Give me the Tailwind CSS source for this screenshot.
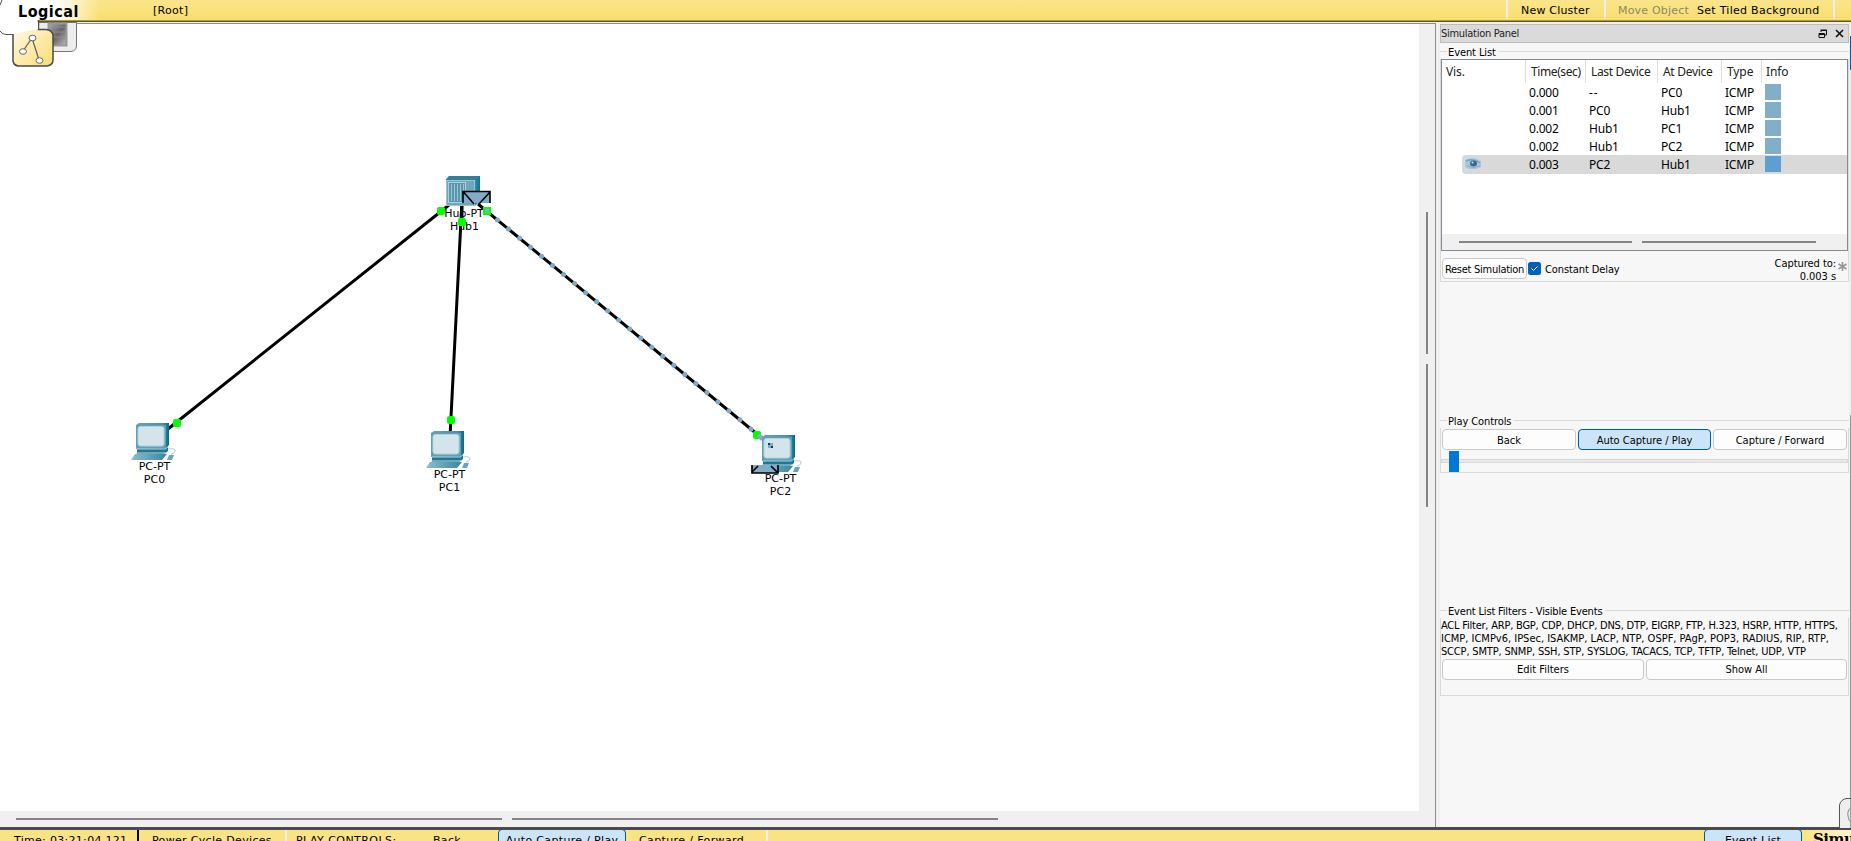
<!DOCTYPE html>
<html lang="en">
<head>
<meta charset="utf-8">
<title>Logical Workspace</title>
<script src="https://cdn.jsdelivr.net/npm/@tailwindcss/browser@4"></script>
</head>
<body class="w-[1851px] h-[841px] overflow-hidden flex flex-col bg-[#f0f0f0] text-black text-[11px] font-['DejaVu_Sans',sans-serif] whitespace-nowrap">

<header class="h-[22px] shrink-0 flex bg-linear-to-b from-[#fbe58b] to-[#f8de6c] border-b border-[#5e5530] shadow-[inset_0_-1px_0_#b29a37]">
  <div class="w-[100px] h-5 bg-linear-to-r from-white from-55% to-white/0 pl-[18px] pt-[2px] text-[16px] leading-[20px] font-bold tracking-[0.5px] font-['DejaVu_Sans_Condensed','DejaVu_Sans',sans-serif]">Logical</div>
  <div class="pl-[53px] leading-[21px] w-[1406px] tracking-[0.3px]">[Root]</div>
  <div class="w-[98px] h-[19px] border-l-2 border-[#eeeeee] pl-[13px] leading-[21px] tracking-[0.2px]">New Cluster</div>
  <div class="w-[229px] h-[19px] border-l-2 border-[#eeeeee] pl-[12px] leading-[21px] flex tracking-[0.28px]"><span class="w-[79px] text-[#8f876b] tracking-[0.2px]">Move Object</span><span>Set Tiled Background</span></div>
  <div class="h-[19px] border-l-2 border-[#eeeeee]"></div>
</header>

<main class="h-[805px] shrink-0 flex">
  <section class="w-[1436px] flex flex-col border-t border-r border-[#888c94] mt-px">
    <div class="h-[787px] flex">
      <svg class="w-[1419px] h-[787px] bg-white" viewBox="0 24 1419 787">
        <defs>
          <linearGradient id="hub" x2="1"><stop stop-color="#70a9bd"/><stop offset=".7" stop-color="#65a0b5"/><stop offset="1" stop-color="#087790"/></linearGradient>
          <linearGradient id="edge" x2="1"><stop stop-color="#68a3b8"/><stop offset=".8" stop-color="#4b91a8"/><stop offset="1" stop-color="#006e89"/></linearGradient>
          <linearGradient id="base" x2="1"><stop stop-color="#8dbdcd"/><stop offset="1" stop-color="#39869f"/></linearGradient>
          <g id="pc">
            <path d="M6 25H34L37 23V28L33 31H6Z" fill="#1d7894"/>
            <path d="M5 2 8 0H38V22L34 26H5Z" fill="url(#edge)"/>
            <rect x="5" y="2" width="30" height="23" fill="#60a0b6"/>
            <rect x="7" y="3.500" width="26" height="19.500" rx="2.500" fill="#d3e4ea" stroke="#b5d1db"/>
            <path d="M6 26H34L37 24" fill="none" stroke="#b4d1db"/>
            <path d="M4 31H36L31 37H0Z" fill="url(#base)"/>
            <path d="M5 30H36" stroke="#c1dae2"/>
            <path d="M37 26Q45 25 44 28T40 31" fill="none" stroke="#b9c9cf"/>
            <path d="M38 32H43L41 37H36Z" fill="#69a3b8"/>
          </g>
        </defs>
        <path d="M449 205 168 429M462 200 450 437M478 204 763 439" fill="none" stroke="#000" stroke-width="3"/>
        <path d="M497.500 220 762 438" stroke="#82aac5" stroke-width="5" stroke-linecap="round" stroke-dasharray="0 14.280"/>
        <path d="m446 179 3-3h31v25l-5 5h-29Z" fill="url(#hub)"/>
        <path d="m446 180 3-4h31l-4 4Z" fill="#347f98"/>
        <rect x="446.500" y="180.500" width="28" height="25" fill="#70a6ba" stroke="#9ac4d1"/>
        <rect x="448.500" y="182.500" width="17" height="20" fill="#5a98ae" stroke="#add0da"/>
        <path d="M451.500 184V201M454.500 184V201M457.500 184V201M460.500 184V201M463.500 184V201" stroke="#9cc2cf"/>
        <path d="M462 206V220" stroke="#000" stroke-width="3"/>
        <path d="M463 191H490V203H463Z" fill="#82abc8"/>
        <path d="M463 203V191.500H490V203M463.500 192 474 204M490 192 479 204" fill="none" stroke="#000" stroke-width="1.600"/>
        <g class="text-[11px]" text-anchor="middle">
          <text x="464" y="217">Hub-PT</text><text x="464.500" y="230">Hub1</text>
        </g>
        <rect x="437" y="207" width="8" height="8" rx="2" fill="#0f0"/>
        <rect x="458" y="218" width="8" height="8" rx="2" fill="#0f0"/>
        <rect x="484" y="208" width="6" height="6" fill="#82abc8" stroke="#0f0" stroke-width="2"/>
        <use href="#pc" x="131" y="423"/><use href="#pc" x="426" y="431"/>
        <rect x="173" y="419" width="8" height="8" rx="2" fill="#0f0"/>
        <rect x="447" y="416" width="8" height="8" rx="2" fill="#0f0"/>
        <rect x="753" y="431" width="8" height="8" rx="2" fill="#0f0"/>
        <path d="M758 435 762 439" stroke="#82abc8" stroke-width="4"/>
        <use href="#pc" x="757" y="435"/>
        <path d="M768 443H773V448H768Z" fill="#7da9c5"/><path d="M768 443H770V445H768ZM771 446H773V448H771Z" fill="#103e55"/>
        <rect x="752" y="465" width="26" height="8" fill="#82abc8"/>
        <path d="M752 465V473H778V465M752 472 758 466M777 472 771 466" fill="none" stroke="#000" stroke-width="1.700"/>
        <g class="text-[11px]" text-anchor="middle">
          <text x="154.500" y="470">PC-PT</text><text x="154.500" y="483">PC0</text>
          <text x="449.500" y="478">PC-PT</text><text x="449.500" y="491">PC1</text>
          <text x="780.500" y="482">PC-PT</text><text x="780.500" y="495">PC2</text>
        </g>
      </svg>
      <div class="w-4 pl-[7px] pt-[188px] flex flex-col gap-[10px]">
        <div class="w-[2px] h-[142px] bg-[#858585]"></div>
        <div class="w-[2px] h-[143px] bg-[#858585]"></div>
      </div>
    </div>
    <div class="h-4 pl-4 pt-[7px] flex gap-[10px]">
      <div class="w-[486px] h-[2px] bg-[#858585]"></div>
      <div class="w-[486px] h-[2px] bg-[#858585]"></div>
    </div>
  </section>

  <aside class="ml-1 w-[409px] mt-[2px] bg-[#f7f7f7] flex flex-col text-[11px] font-['DejaVu_Sans_Condensed','DejaVu_Sans',sans-serif]">
    <div class="h-[19px] shrink-0 border border-[#bcbcbc] bg-[#dadada] flex items-center pt-px">
      <span class="text-[#222] flex-1 tracking-[-0.28px]">Simulation Panel</span>
      <svg class="w-[27px] h-[10px] mr-[3px]" viewBox="0 0 27 10" fill="none" stroke="#111"><path d="M3 3V1.500H8.500V6H7M2.500 1H9" /><path d="M1 4.500H6.500V8.500H1ZM1 5.500H6" /><path d="m18 1 7 7m0-7-7 7" stroke-width="1.600"/></svg>
    </div>

    <div class="h-[239px] shrink-0 flex flex-col">
      <div class="h-[16px] flex items-center"><i class="w-[7px] h-px bg-[#dadada]"></i><span class="px-px pt-[4px] tracking-[-0.1px]">Event List</span><i class="flex-1 h-px ml-[2px] bg-[#dadada]"></i></div>
      <div class="h-[223px] border-x border-b border-[#dadada]">
        <div class="h-[192px] border border-[#858993] bg-white flex flex-col text-[12px] font-['Noto_Sans',sans-serif]">
          <div class="h-[23px] flex leading-[24px] text-[#222] tracking-[-0.1px]">
            <div class="w-[84px] pl-1 border-r border-[#dedede]">Vis.</div>
            <div class="w-[60px] pl-[5px] border-r border-[#dedede] tracking-[-0.4px]">Time(sec)</div>
            <div class="w-[72px] pl-[5px] border-r border-[#dedede] tracking-[-0.35px]">Last Device</div>
            <div class="w-[64px] pl-[5px] border-r border-[#dedede] tracking-[-0.3px]">At Device</div>
            <div class="w-[40px] pl-[5px] border-r border-[#dedede]">Type</div>
            <div class="pl-1">Info</div>
          </div>
          <div class="flex flex-col leading-[18px] h-[151px] pt-px tracking-[-0.2px]">
            <div class="h-[18px] flex pl-[87px]"><span class="w-[60px]">0.000</span><span class="w-[72px] tracking-[1px]">--</span><span class="w-[64px]">PC0</span><span class="w-[40px]">ICMP</span><i class="size-4 bg-[#82aeca]"></i></div>
            <div class="h-[18px] flex pl-[87px]"><span class="w-[60px]">0.001</span><span class="w-[72px]">PC0</span><span class="w-[64px]">Hub1</span><span class="w-[40px]">ICMP</span><i class="size-4 bg-[#82aeca]"></i></div>
            <div class="h-[18px] flex pl-[87px]"><span class="w-[60px]">0.002</span><span class="w-[72px]">Hub1</span><span class="w-[64px]">PC1</span><span class="w-[40px]">ICMP</span><i class="size-4 bg-[#82aeca]"></i></div>
            <div class="h-[18px] flex pl-[87px]"><span class="w-[60px]">0.002</span><span class="w-[72px]">Hub1</span><span class="w-[64px]">PC2</span><span class="w-[40px]">ICMP</span><i class="size-4 bg-[#82aeca]"></i></div>
            <div class="h-[19px] ml-5 -mt-px pt-px flex bg-[#d9d9d9] rounded-l-sm">
              <svg class="w-[67px] h-4 shrink-0" viewBox="0 0 67 16"><path d="M3 4Q9 1 15 3L19 5V11L14 13H7L3 11Z" fill="#a3c8df"/><path d="M4 5Q11 2 18 7" fill="none" stroke="#7ea6be" stroke-width="1.500"/><ellipse cx="11.500" cy="7.500" rx="3.500" ry="3" fill="#3b6b89"/><circle cx="10.500" cy="6.500" r="1" fill="#c9e4f3"/><path d="M5 10Q11 13 18 10" fill="none" stroke="#82adc6"/></svg>
              <span class="w-[60px]">0.003</span><span class="w-[72px]">PC2</span><span class="w-[64px]">Hub1</span><span class="w-[40px]">ICMP</span><i class="size-4 bg-[#5d9fd0]"></i></div>
          </div>
          <div class="h-4 bg-[#f0f0f0] pl-[17px] pt-[7px] flex gap-[10px]"><i class="w-[173px] h-[2px] bg-[#858585]"></i><i class="w-[174px] h-[2px] bg-[#858585]"></i></div>
        </div>
        <div class="flex pt-[7px] pl-px">
          <div class="w-[85px] h-[21px] border border-[#c9c9c9] rounded bg-[#fdfdfd] text-center leading-[21px] tracking-[-0.27px]">Reset Simulation</div>
          <svg class="w-[13px] h-[13px] ml-px mt-1" viewBox="0 0 13 13"><rect width="13" height="13" rx="2.500" fill="#0560b6"/><path d="m3.500 6.500 2 2 4-4" fill="none" stroke="#fff"/></svg>
          <span class="ml-1 leading-[23px] tracking-[-0.1px]">Constant Delay</span>
          <div class="ml-auto text-right leading-[13px] -mt-px tracking-[-0.05px]">Captured to:<br>0.003 s</div>
          <svg class="w-[9px] h-[9px] ml-[2px] mr-px mt-[4px]" viewBox="0 0 9 9" stroke="#969696" stroke-width="1.600"><path d="M4.500 0V9M.5 2 8.500 7M.5 7 8.500 2"/></svg>
        </div>
      </div>
    </div>

    <div class="h-[60px] mt-[130px] shrink-0 flex flex-col">
      <div class="h-[16px] flex items-center"><i class="w-[7px] h-px bg-[#dadada]"></i><span class="px-px pt-[4px] tracking-[-0.1px]">Play Controls</span><i class="flex-1 h-px ml-[2px] bg-[#dadada]"></i></div>
      <div class="h-[45px] border-x border-b border-[#dadada] pt-px">
        <div class="flex gap-[2px] px-px text-center leading-[21px]">
          <div class="w-[134px] h-[21px] border border-[#c9c9c9] rounded bg-[#fdfdfd]">Back</div>
          <div class="w-[133px] h-[21px] border border-[#005a9e] rounded bg-[#cce4f7]">Auto Capture / Play</div>
          <div class="flex-1 h-[21px] border border-[#c9c9c9] rounded bg-[#fdfdfd]">Capture / Forward</div>
        </div>
        <div class="h-[22px] pt-[9px]"><div class="relative h-1 border border-[#d6d6d6] bg-[#e7eaea]"><i class="absolute left-[7px] -top-[9px] w-[10px] h-[21px] bg-[#0078d7]"></i></div></div>
      </div>
    </div>

    <div class="h-[95px] mt-[130px] shrink-0 flex flex-col">
      <div class="h-[16px] flex items-center"><i class="w-[7px] h-px bg-[#dadada]"></i><span class="px-px pt-[4px] tracking-[-0.17px]">Event List Filters - Visible Events</span><i class="flex-1 h-px ml-[2px] bg-[#dadada]"></i></div>
      <div class="h-[78px] shrink-0 border-x border-b border-[#dadada] pt-px">
        <div class="leading-[13px]"><div class="tracking-[-0.22px]">ACL Filter, ARP, BGP, CDP, DHCP, DNS, DTP, EIGRP, FTP, H.323, HSRP, HTTP, HTTPS,</div><div class="tracking-[-0.01px]">ICMP, ICMPv6, IPSec, ISAKMP, LACP, NTP, OSPF, PAgP, POP3, RADIUS, RIP, RTP,</div><div class="tracking-[-0.17px]">SCCP, SMTP, SNMP, SSH, STP, SYSLOG, TACACS, TCP, TFTP, Telnet, UDP, VTP</div></div>
        <div class="flex gap-[2px] px-px pt-px text-center leading-[20px]">
          <div class="w-[202px] h-[21px] border border-[#c9c9c9] rounded bg-[#fdfdfd]">Edit Filters</div>
          <div class="flex-1 h-[21px] border border-[#c9c9c9] rounded bg-[#fdfdfd]">Show All</div>
        </div>
      </div>
    </div>
  </aside>
  <div class="w-[2px] pl-px pt-[14px]"><div class="h-[34px] bg-[#005a9e]"></div><div class="mt-[345px] h-[400px] bg-[#999]"></div></div>
</main>

<footer class="h-[14px] shrink-0 border-t-3 border-[#4b4b4b] bg-[#fae384] flex overflow-hidden leading-[22px]">
  <div class="w-[137px] pl-[14px] tracking-[0.3px]">Time: 03:21:04.121</div>
  <div class="w-[148px] border-l-2 border-black pl-[13px] tracking-[0.33px]">Power Cycle Devices</div>
  <div class="w-[148px] border-l-2 border-[#eee] pl-[9px] tracking-[0.45px]">PLAY CONTROLS:</div>
  <div class="w-[65px] tracking-[0.3px]">Back</div>
  <div class="w-[128px] h-6 -mt-px border border-[#005a9e] rounded bg-[#cce4f7] text-center tracking-[0.33px]">Auto Capture / Play</div>
  <div class="w-[140px] pl-[13px] tracking-[0.38px]">Capture / Forward</div>
  <div class="w-[938px] border-l-2 border-[#eee]"></div>
  <div class="w-[98px] h-6 -mt-px border border-[#005a9e] rounded bg-[#cce4f7] text-center tracking-[0.2px]">Event List</div>
  <div class="pl-[11px] w-[49px] bg-linear-to-r from-[#fae384] to-[#fff5cc] text-[15px] leading-[18px] font-bold font-['DejaVu_Serif',serif] tracking-[-0.5px]">Simulation</div>
</footer>

<!-- view-switcher tabs overlapping the workspace corner -->
<svg class="absolute left-0 top-0 w-[80px] h-[70px]" viewBox="0 0 80 70">
  <defs><linearGradient id="tab" x2="1" y2="1"><stop stop-color="#fffdf3"/><stop offset="1" stop-color="#f9dd70"/></linearGradient>
  <linearGradient id="rack" x2="1" y2="1"><stop stop-color="#aaa"/><stop offset=".5" stop-color="#666"/><stop offset="1" stop-color="#bbb"/></linearGradient></defs>
  <path d="M38.500 22.500H76.500V46Q76 51 71 51.500H48" fill="#ededed" stroke="#777"/>
  <rect x="48.500" y="23.500" width="18" height="22" fill="url(#rack)" stroke="#999" stroke-width="2"/>
  <path d="M54 27H65M54 32H65M54 37H65" stroke="#8e8e8e"/>
  <path d="M0 5V29Q0 34 5 34H14V31H38V20H18V6Q5 4 2 0Z" fill="#fff"/>
  <path d="M0 5 2 0M0 31Q2 34.500 6 34.500H13" fill="none" stroke="#555"/>
  <path d="M13 34V61Q14 66 19 66H47Q53 65 53 60V35Q52 30 46 29.500H38.500V20" fill="url(#tab)" stroke="#4a4a4a" stroke-width="1.500"/>
  <path d="M13 34V22H38V29Z" fill="#fff"/>
  <path d="M23 51 32 38 39 60" fill="none" stroke="#666" stroke-width="1.300"/>
  <g fill="#fff" stroke="#666"><ellipse cx="23" cy="51.500" rx="3.500" ry="2.800"/><ellipse cx="32.500" cy="38" rx="3.500" ry="2.800"/><ellipse cx="39.500" cy="60.500" rx="3.500" ry="2.800"/></g>
</svg>
<svg class="absolute left-[1839px] top-[798px] w-3 h-[30px]" viewBox="0 0 12 30"><path d="M.5 30V7Q2 1 8 .5H12V30" fill="#eee" stroke="#555"/><path d="M12 10Q8 12 9 18T12 24" fill="none" stroke="#888"/></svg>
</body>
</html>
